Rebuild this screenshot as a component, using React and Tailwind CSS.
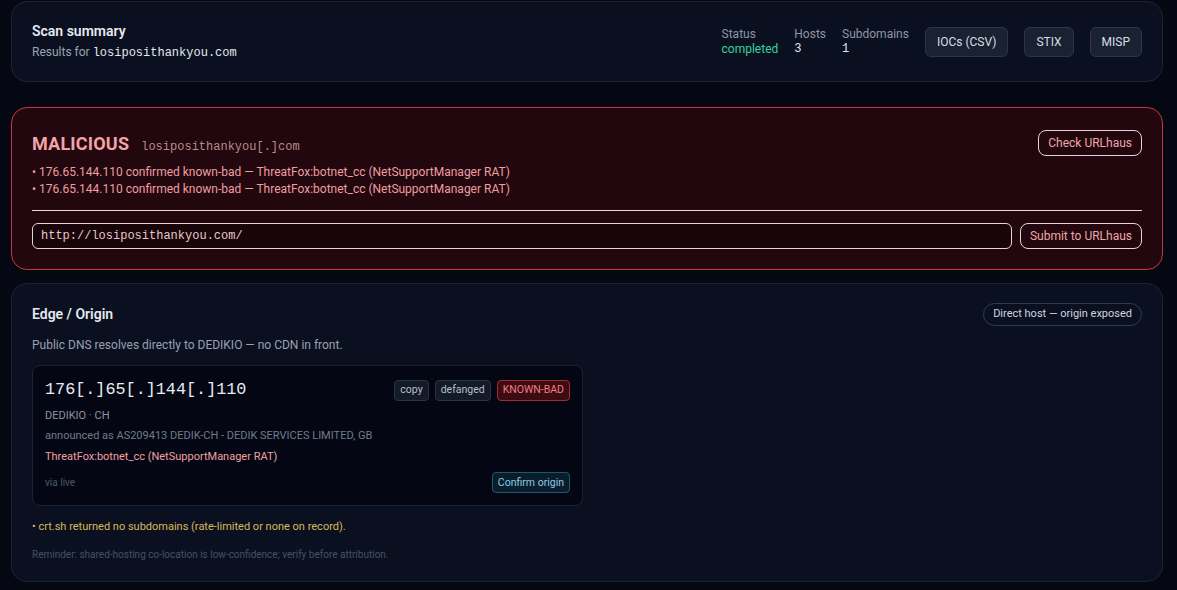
export default function App() {
  const sans = { fontFamily: "Roboto, 'Noto Sans', sans-serif" };
  return (
    <div className="min-h-screen bg-[#050813] pl-[11px] pr-[14px] pt-px pb-4 text-[12px]" style={sans}>
      {/* Scan summary */}
      <div className="h-[81px] rounded-2xl border border-[#1c2434] bg-[#0b1020] px-5 flex items-center justify-between">
        <div className="flex flex-col">
          <div className="text-[14px] font-semibold text-[#e5e9f0] leading-[20px]">Scan summary</div>
          <div className="mt-[2px] text-[12px] text-[#9aa3b2] leading-[18px]">
            Results for{" "}
            <span className="font-['Liberation_Mono',monospace] text-[12px] text-[#e2e8f0]">losiposithankyou.com</span>
          </div>
        </div>
        <div className="flex items-center gap-4">
          <div className="flex flex-col leading-[15px]">
            <span className="text-[#8d96a6]">Status</span>
            <span className="text-[#34d399]">completed</span>
          </div>
          <div className="flex flex-col leading-[15px]">
            <span className="text-[#8d96a6]">Hosts</span>
            <span className="font-['Liberation_Mono',monospace] text-[#e2e8f0]">3</span>
          </div>
          <div className="flex flex-col leading-[15px]">
            <span className="text-[#8d96a6]">Subdomains</span>
            <span className="font-['Liberation_Mono',monospace] text-[#e2e8f0]">1</span>
          </div>
          <button className="h-[30px] px-[11px] rounded-md border border-[#2c3647] bg-[#1a2232] text-[#d6dce6] text-[12px]">IOCs (CSV)</button>
          <button className="h-[30px] px-[11px] rounded-md border border-[#2c3647] bg-[#1a2232] text-[#d6dce6] text-[12px]">STIX</button>
          <button className="h-[30px] px-[11px] rounded-md border border-[#2c3647] bg-[#1a2232] text-[#d6dce6] text-[12px]">MISP</button>
        </div>
      </div>

      {/* Malicious */}
      <div className="mt-[25px] rounded-2xl border border-[#c2393d] bg-[#22070e] px-5 pt-[22px] pb-5">
        <div className="flex items-center justify-between h-[26px]">
          <div className="flex items-baseline gap-3">
            <span className="text-[18px] font-bold text-[#f4a3a6] tracking-[0.2px]">MALICIOUS</span>
            <span className="font-['Liberation_Mono',monospace] text-[12px] text-[#b98a8d]">losiposithankyou[.]com</span>
          </div>
          <button className="h-[26px] px-[9px] rounded-lg border border-[#e8d4d5] text-[#eda6a9] text-[12px]">Check URLhaus</button>
        </div>
        <div className="mt-2 text-[#ee9ea1] leading-[17px]">
          <div>• 176.65.144.110 confirmed known-bad — ThreatFox:botnet_cc (NetSupportManager RAT)</div>
          <div>• 176.65.144.110 confirmed known-bad — ThreatFox:botnet_cc (NetSupportManager RAT)</div>
        </div>
        <div className="mt-3 h-px bg-[#f0d6d7]"></div>
        <div className="mt-3 flex items-center gap-2">
          <div className="flex-1 h-[26px] rounded-md border border-[#e8d4d5] bg-[#170509] px-2 flex items-center font-['Liberation_Mono',monospace] text-[12px] text-[#e8c8ca]">
            http://losiposithankyou.com/
          </div>
          <button className="h-[26px] px-[9px] rounded-lg border border-[#e8d4d5] text-[#eda6a9] text-[12px]">Submit to URLhaus</button>
        </div>
      </div>

      {/* Edge / Origin */}
      <div className="mt-[13px] rounded-2xl border border-[#1c2434] bg-[#0b1020] px-5 pt-[19px] pb-[19px]">
        <div className="flex items-center justify-between h-[23px]">
          <span className="text-[14px] font-semibold text-[#e5e9f0]">Edge / Origin</span>
          <span className="h-[23px] px-[9px] rounded-full border border-[#313b4d] text-[#cfd5df] text-[11px] flex items-center">Direct host — origin exposed</span>
        </div>
        <div className="mt-[11px] text-[#98a1b0] leading-[16px]">Public DNS resolves directly to DEDIKIO — no CDN in front.</div>
        <div className="mt-[12px] w-[551px] rounded-lg border border-[#1a2232] bg-[#040713] px-3 pt-[14px] pb-3">
          <div className="flex items-center justify-between h-[20px]">
            <span className="font-['Liberation_Mono',monospace] text-[16.8px] text-[#e8ecf2]">176[.]65[.]144[.]110</span>
            <div className="flex items-center gap-[6px]">
              <span className="h-[21px] px-[5px] rounded border border-[#2a3344] bg-[#131a28] text-[#b7bfcc] text-[10.5px] flex items-center">copy</span>
              <span className="h-[21px] px-[5px] rounded border border-[#2a3344] bg-[#131a28] text-[#b7bfcc] text-[10.5px] flex items-center">defanged</span>
              <span className="h-[21px] px-[5px] rounded border border-[#a52a30] bg-[#3d0b12] text-[#f07e84] text-[10.5px] flex items-center">KNOWN-BAD</span>
            </div>
          </div>
          <div className="mt-[8px] text-[11px] leading-[16px] text-[#8a93a3]">DEDIKIO · CH</div>
          <div className="mt-[4px] text-[11px] leading-[16px] text-[#717b8c]">announced as AS209413 DEDIK-CH - DEDIK SERVICES LIMITED, GB</div>
          <div className="mt-[5px] text-[11px] leading-[16px] text-[#f0a0a4]">ThreatFox:botnet_cc (NetSupportManager RAT)</div>
          <div className="mt-[7px] flex items-center justify-between h-[21px]">
            <span className="text-[10px] text-[#4d5768]">via live</span>
            <span className="h-[21px] px-[5px] rounded border border-[#1c5670] bg-[#0a1d2c] text-[#8fcbe6] text-[10.5px] flex items-center">Confirm origin</span>
          </div>
        </div>
        <div className="mt-[13px] text-[11px] leading-[16px] text-[#d8b85a]">• crt.sh returned no subdomains (rate-limited or none on record).</div>
        <div className="mt-[13px] text-[10px] leading-[14px] text-[#465063]">Reminder: shared-hosting co-location is low-confidence; verify before attribution.</div>
      </div>
    </div>
  );
}
